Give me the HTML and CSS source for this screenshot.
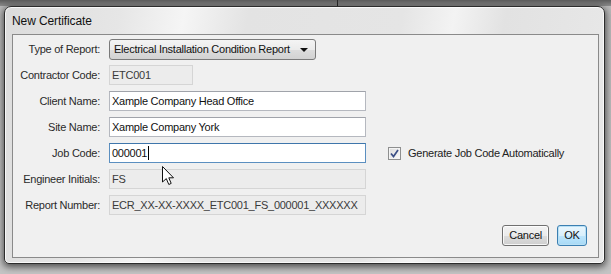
FILE: index.html
```html
<!DOCTYPE html>
<html lang="en">

<head>
    <meta charset="UTF-8">
    <title>New Certificate</title>
    <link rel="stylesheet" href="styles.css">
</head>

<body>
    <div class="window">
        <div class="title">New Certificate</div>
        <div class="panel">
            <div class="row">
                <label class="lbl">Type of Report:</label>
                <div class="select">Electrical Installation Condition Report<span class="arrow"></span></div>
            </div>
            <div class="row">
                <label class="lbl">Contractor Code:</label>
                <div class="field ro short">ETC001</div>
            </div>
            <div class="row">
                <label class="lbl">Client Name:</label>
                <div class="field">Xample Company Head Office</div>
            </div>
            <div class="row">
                <label class="lbl">Site Name:</label>
                <div class="field">Xample Company York</div>
            </div>
            <div class="row">
                <label class="lbl">Job Code:</label>
                <div class="field focus">000001<span class="caret"></span></div>
                <div class="check">
                    <span class="box">
                        <svg width="9" height="9" viewBox="0 0 9 9">
                            <path d="M1 4.5 L3.5 7.5 L8 1" fill="none" stroke="#3b4f86" stroke-width="1.7" />
                        </svg>
                    </span>
                    Generate Job Code Automatically
                </div>
            </div>
            <div class="row">
                <label class="lbl">Engineer Initials:</label>
                <div class="field ro">FS</div>
            </div>
            <div class="row">
                <label class="lbl">Report Number:</label>
                <div class="field ro">ECR_XX-XX-XXXX_ETC001_FS_000001_XXXXXX</div>
            </div>
            <div class="buttons">
                <div class="btn">Cancel</div>
                <div class="btn default">OK</div>
            </div>
        </div>
    </div>
    <!-- mouse pointer over the dialog -->
    <svg class="pointer" width="13" height="20" viewBox="0 0 13 20">
        <path d="M0.5 0.5 V16 L4.3 12.6 L6.8 18.5 L9.2 17.4 L6.8 11.8 H11.5 Z" fill="#fff" stroke="#111" stroke-width="1" />
    </svg>
</body>

</html>
```
FILE: styles.css
```css
* {
    margin: 0;
    padding: 0;
    box-sizing: border-box;
}

body {
    width: 611px;
    height: 274px;
    overflow: hidden;
    position: relative;
    padding: 6px 6px 0 4px;
    font-family: "Liberation Sans", Arial, sans-serif;
    font-size: 11px;
    letter-spacing: -0.25px;
    color: #1e1e1e;
    background:
        linear-gradient(90deg, transparent 337px, #2a2a2a 337px, #2a2a2a 338px, transparent 338px) 0 0 / 100% 6px no-repeat,
        linear-gradient(#5c5c5c, #8c8c8c 6px, #b9b9b9 6px, #c4c4c4 100%);
}

.window {
    height: 258px;
    display: flex;
    flex-direction: column;
    padding: 0 5px 5px 7px;
    border: 1px solid #2c2c2c;
    border-radius: 7px 7px 5px 5px;
    background: linear-gradient(100deg, #dcdcdc 0%, #e6e6e6 18%, #f5f5f5 28%, #e3e3e3 38%, #e5e5e5 62%, #f3f3f3 70%, #e2e2e2 78%, #e9e9e9 100%);
    box-shadow: 0 2px 7px 1px rgba(0, 0, 0, 0.6), inset 0 0 0 1px rgba(255, 255, 255, 0.75);
}

.title {
    height: 27px;
    line-height: 28px;
    font-size: 12px;
    letter-spacing: -0.1px;
    color: #111;
}

.panel {
    flex: 1;
    border: 1px solid #8a8a8a;
    background: #f0f0f0;
    padding: 4px 11px 0 0;
}

.row {
    display: flex;
    align-items: center;
    height: 20px;
    margin-top: 6px;
}

.row:first-child {
    margin-top: 0;
    margin-bottom: 1px;
}

.lbl {
    width: 87px;
    margin-right: 9px;
    text-align: right;
    color: #2a2a2a;
}

.field {
    width: 257px;
    height: 20px;
    line-height: 18px;
    padding-left: 2px;
    background: #fff;
    border: 1px solid #b5b8bf;
    border-top-color: #a0a3aa;
    color: #111;
    white-space: nowrap;
}

.field.ro {
    background: #ececec;
    border-color: #d5d5d5;
    color: #3a3a3a;
}

.field.short {
    width: 84px;
}

.field.focus {
    border-color: #5b8fc0;
    border-top-color: #3f76ab;
}

.caret {
    display: inline-block;
    width: 1px;
    height: 14px;
    margin-left: 1px;
    background: #000;
    vertical-align: -3px;
}

.select {
    position: relative;
    width: 207px;
    height: 21px;
    line-height: 19px;
    padding-left: 4px;
    border: 1px solid #7a7a7a;
    border-radius: 3px;
    background: linear-gradient(#f4f4f4, #ebebeb 50%, #dddddd 51%, #d2d2d2);
    color: #111;
}

.arrow {
    position: absolute;
    right: 7px;
    top: 8px;
    border-left: 4px solid transparent;
    border-right: 4px solid transparent;
    border-top: 4px solid #111;
}

.check {
    display: flex;
    align-items: center;
    margin-left: 22px;
    color: #222;
}

.box {
    width: 13px;
    height: 13px;
    margin-right: 7px;
    display: flex;
    align-items: center;
    justify-content: center;
    border: 1px solid #8e8f8f;
    background: linear-gradient(135deg, #dcdcdc, #fafafa);
    box-shadow: inset 0 0 0 1px #f4f4f4;
}

.buttons {
    display: flex;
    justify-content: flex-end;
    gap: 8px;
    margin-top: 10px;
}

.btn {
    height: 21px;
    line-height: 19px;
    padding: 0 6px;
    text-align: center;
    border: 1px solid #707070;
    border-radius: 3px;
    background: linear-gradient(#f2f2f2, #ebebeb 50%, #dddddd 51%, #cfcfcf);
    box-shadow: inset 0 0 0 1px rgba(255, 255, 255, 0.8);
    color: #111;
}

.btn.default {
    width: 30px;
    padding: 0;
    border-color: #3c7fb1;
    background: linear-gradient(#eaf6fd, #d9f0fc 50%, #bee6fd 51%, #a7d9f5);
    box-shadow: inset 0 0 0 1px #b8e0f5;
}

.pointer {
    position: absolute;
    left: 162px;
    top: 166px;
}
```
